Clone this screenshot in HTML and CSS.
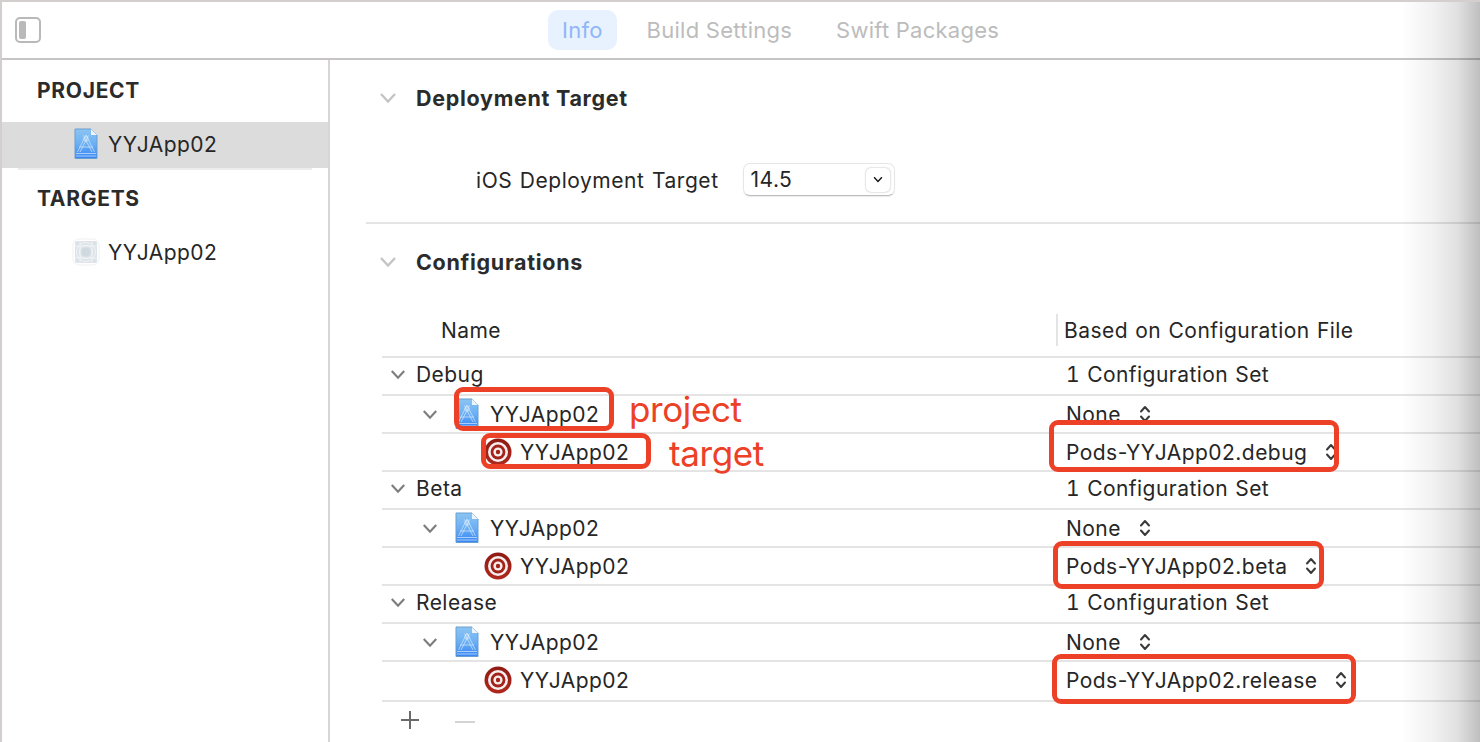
FILE: index.html
```html
<!DOCTYPE html>
<html lang="en">
<head>
  <meta charset="UTF-8">
  <title>YYJApp02 - Info</title>
  <link rel="stylesheet" href="styles.css">
</head>
<body>

  <!-- shared icons -->
  <svg class="defs" width="0" height="0">
    <defs>
      <linearGradient id="docBlue" x1="0" y1="0" x2="0" y2="1">
        <stop offset="0" stop-color="#8cc4f2"/>
        <stop offset="0.5" stop-color="#6cb0f4"/>
        <stop offset="1" stop-color="#3584f5"/>
      </linearGradient>
      <linearGradient id="targetRed" x1="0" y1="0" x2="0" y2="1">
        <stop offset="0" stop-color="#8f1a14"/>
        <stop offset="1" stop-color="#b0281e"/>
      </linearGradient>
      <symbol id="chevron" viewBox="0 0 18 12">
        <path d="M2 2 L9 9.5 L16 2" fill="none" stroke="currentColor" stroke-width="2.4"/>
      </symbol>
      <symbol id="stepper" viewBox="0 0 12 20">
        <path d="M2 7.5 L6 3 L10 7.5 M2 12.5 L6 17 L10 12.5" fill="none" stroke="#3a3a3a" stroke-width="2" stroke-linecap="round" stroke-linejoin="round"/>
      </symbol>
      <symbol id="doc" viewBox="0 0 24 32">
        <path d="M1 1 H17 L23 7 V30.5 H1 Z" fill="url(#docBlue)" stroke="#6b9fd0" stroke-width="1"/>
        <path d="M17 1 V7 H23 Z" fill="#eef4fb"/>
        <path d="M12 7 L3.5 24 M12 7 L20.5 24 M9.5 7.5 L18 24 M14.5 7.5 L6 24 M5 19 H19 M2 25.5 H22 M2 28 H22" fill="none" stroke="#e4f0fc" stroke-opacity="0.7" stroke-width="0.9"/>
        <circle cx="12" cy="11" r="2.2" fill="none" stroke="#e4f0fc" stroke-opacity="0.7" stroke-width="0.9"/>
      </symbol>
      <symbol id="target" viewBox="0 0 28 28">
        <circle cx="14" cy="14" r="13.5" fill="url(#targetRed)"/>
        <circle cx="14" cy="14" r="10" fill="#f6efee"/>
        <circle cx="14" cy="14" r="7.4" fill="#a3231b"/>
        <circle cx="14" cy="14" r="4.6" fill="#f6efee"/>
        <circle cx="14" cy="14" r="2.2" fill="#a3231b"/>
      </symbol>
      <symbol id="appTarget" viewBox="0 0 28 28">
        <rect x="1" y="1" width="26" height="26" rx="6" fill="#fff" stroke="#f0f1f3"/>
        <rect x="3" y="3" width="22" height="22" rx="2" fill="#dbe3e8"/>
        <circle cx="14" cy="14" r="9.5" fill="none" stroke="#f2f5f6"/>
        <circle cx="14" cy="14" r="6.8" fill="none" stroke="#f2f5f6"/>
        <circle cx="14" cy="14" r="4.6" fill="#cfd9df"/>
        <path d="M3 8 H25 M3 20 H25 M8 3 V25 M20 3 V25" stroke="#f2f5f6" stroke-width="0.8"/>
      </symbol>
    </defs>
  </svg>

  <div class="window">
    <header class="toolbar">
      <span class="sidebar-toggle"><span class="sidebar-toggle-fill"></span></span>
      <nav class="tabs">
        <span class="tab tab-active">Info</span>
        <span class="tab">Build Settings</span>
        <span class="tab">Swift Packages</span>
      </nav>
    </header>

    <div class="content">
      <aside class="sidebar">
        <h3 class="sidebar-title">PROJECT</h3>
        <div class="sidebar-item sidebar-item-selected">
          <svg class="icon-doc-side"><use href="#doc"/></svg>
          <span>YYJApp02</span>
        </div>
        <div class="sidebar-rule"></div>
        <h3 class="sidebar-title sidebar-title-targets">TARGETS</h3>
        <div class="sidebar-item">
          <svg class="icon-app-target"><use href="#appTarget"/></svg>
          <span>YYJApp02</span>
        </div>
      </aside>

      <main class="main">
        <section class="section-deploy">
          <div class="section-head">
            <svg class="chevron-head"><use href="#chevron"/></svg>
            <h2>Deployment Target</h2>
          </div>
          <div class="form-row">
            <label>iOS Deployment Target</label>
            <div class="popup">
              <span>14.5</span>
              <span class="popup-btn"><svg class="popup-chevron"><use href="#chevron"/></svg></span>
            </div>
          </div>
        </section>

        <section class="section-config">
          <div class="section-head">
            <svg class="chevron-head"><use href="#chevron"/></svg>
            <h2>Configurations</h2>
          </div>

          <div class="table">
            <div class="table-head">
              <div class="col-name">Name</div>
              <div class="col-file">Based on Configuration File</div>
            </div>

            <div class="row row-group">
              <div class="cell-name lvl-0"><svg class="chevron-row"><use href="#chevron"/></svg>Debug</div>
              <div class="cell-file config-set">1 Configuration Set</div>
            </div>
            <div class="row">
              <div class="cell-name lvl-1"><svg class="chevron-row"><use href="#chevron"/></svg><svg class="icon-doc"><use href="#doc"/></svg>YYJApp02</div>
              <div class="cell-file">None<svg class="stepper"><use href="#stepper"/></svg></div>
            </div>
            <div class="row">
              <div class="cell-name lvl-2"><svg class="icon-target"><use href="#target"/></svg>YYJApp02</div>
              <div class="cell-file">Pods-YYJApp02.debug<svg class="stepper"><use href="#stepper"/></svg></div>
            </div>

            <div class="row row-group">
              <div class="cell-name lvl-0"><svg class="chevron-row"><use href="#chevron"/></svg>Beta</div>
              <div class="cell-file config-set">1 Configuration Set</div>
            </div>
            <div class="row">
              <div class="cell-name lvl-1"><svg class="chevron-row"><use href="#chevron"/></svg><svg class="icon-doc"><use href="#doc"/></svg>YYJApp02</div>
              <div class="cell-file">None<svg class="stepper"><use href="#stepper"/></svg></div>
            </div>
            <div class="row">
              <div class="cell-name lvl-2"><svg class="icon-target"><use href="#target"/></svg>YYJApp02</div>
              <div class="cell-file">Pods-YYJApp02.beta<svg class="stepper"><use href="#stepper"/></svg></div>
            </div>

            <div class="row row-group">
              <div class="cell-name lvl-0"><svg class="chevron-row"><use href="#chevron"/></svg>Release</div>
              <div class="cell-file config-set">1 Configuration Set</div>
            </div>
            <div class="row">
              <div class="cell-name lvl-1"><svg class="chevron-row"><use href="#chevron"/></svg><svg class="icon-doc"><use href="#doc"/></svg>YYJApp02</div>
              <div class="cell-file">None<svg class="stepper"><use href="#stepper"/></svg></div>
            </div>
            <div class="row row-last">
              <div class="cell-name lvl-2"><svg class="icon-target"><use href="#target"/></svg>YYJApp02</div>
              <div class="cell-file">Pods-YYJApp02.release<svg class="stepper"><use href="#stepper"/></svg></div>
            </div>

            <div class="table-foot">
              <span class="foot-plus"></span>
              <span class="foot-minus"></span>
            </div>
          </div>
        </section>
      </main>
    </div>

    <!-- red markup drawn over the screenshot -->
    <div class="mark mark-project"></div>
    <div class="mark mark-target"></div>
    <div class="mark mark-debug"></div>
    <div class="mark mark-beta"></div>
    <div class="mark mark-release"></div>
    <span class="mark-label label-project">project</span>
    <span class="mark-label label-target">target</span>

    <div class="edge-shadow"></div>
  </div>

</body>
</html>
```

FILE: styles.css
```css
html, body {
  margin: 0;
  padding: 0;
}

body {
  font-family: Inter, "Liberation Sans", sans-serif;
  font-size: 21px;
  letter-spacing: 0.45px;
  word-spacing: 1px;
  color: #262626;
  background: #fff;
  overflow: hidden;
}

.defs {
  position: absolute;
}

.window {
  position: relative;
  width: 1480px;
  height: 742px;
  box-sizing: border-box;
  border-top: 2px solid #d3cfcf;
  border-left: 2px solid #d3cfcf;
  overflow: hidden;
}

/* toolbar */
.toolbar {
  display: flex;
  align-items: center;
  height: 56px;
  box-sizing: content-box;
  border-bottom: 2px solid #c6c4c4;
}

.sidebar-toggle {
  display: flex;
  width: 26px;
  height: 26px;
  box-sizing: border-box;
  margin-left: 13px;
  padding: 2px;
  border: 2px solid #b9b9b9;
  border-radius: 5px;
}

.sidebar-toggle-fill {
  width: 7px;
  background: #b9b9b9;
  border-radius: 2px;
}

.tabs {
  display: flex;
  gap: 16px;
  margin-left: 507px;
}

.tab {
  padding: 0 14px;
  height: 40px;
  line-height: 40px;
  font-size: 22px;
  letter-spacing: 0.25px;
  word-spacing: 0;
  color: #bcbcbc;
  border-radius: 10px;
}

.tab-active {
  background: #e8f1fe;
  color: #8fb6f9;
}

/* sidebar */
.content {
  display: flex;
  height: 682px;
}

.sidebar {
  width: 326px;
  flex: none;
  border-right: 2px solid #d8d5d5;
}

.sidebar-title {
  margin: 0;
  padding: 17px 0 0 35px;
  height: 62px;
  box-sizing: border-box;
  line-height: 28px;
  font-size: 21px;
  font-weight: 700;
  letter-spacing: 0.7px;
  color: #2b2b2b;
}

.sidebar-title-targets {
  padding-top: 15px;
  height: 59px;
}

.sidebar-item {
  display: flex;
  align-items: center;
  height: 46px;
  box-sizing: border-box;
  padding-left: 106px;
}

.sidebar-item-selected {
  background: #dcdcdc;
  padding-bottom: 2px;
}

.sidebar-rule {
  height: 2px;
  margin: 0 16px;
  background: #ececec;
}

.icon-doc-side {
  width: 24px;
  height: 32px;
  margin-left: -34px;
  margin-right: 10px;
}

.icon-app-target {
  width: 28px;
  height: 28px;
  margin-left: -36px;
  margin-right: 8px;
}

/* main pane */
.main {
  flex: 1;
  min-width: 0;
}

.section-head {
  display: flex;
  align-items: center;
  height: 36px;
  padding-left: 49px;
}

.section-head h2 {
  margin: 0;
  font-size: 21.5px;
  font-weight: 700;
  letter-spacing: 0.7px;
  word-spacing: 0;
  color: #2b2b2b;
}

.chevron-head {
  width: 18px;
  height: 12px;
  margin-right: 19px;
  color: #c4c4c4;
}

.section-deploy {
  padding-top: 20px;
}

.form-row {
  display: flex;
  align-items: center;
  height: 33px;
  margin-top: 47px;
  padding-left: 146px;
}

.form-row label {
  margin-right: 24px;
  padding-top: 2px;
  letter-spacing: 0.55px;
}

.popup {
  display: flex;
  align-items: center;
  justify-content: space-between;
  width: 152px;
  height: 33px;
  box-sizing: border-box;
  padding: 0 4px 0 7px;
  border: 1px solid #e6e6e6;
  border-bottom-color: #bdbdbd;
  border-radius: 7px;
  box-shadow: 0 1px 1px rgba(0, 0, 0, 0.08);
}

.popup-btn {
  display: flex;
  align-items: center;
  justify-content: center;
  width: 24px;
  height: 24px;
  border-radius: 5px;
  box-shadow: 0 0 2px rgba(0, 0, 0, 0.35);
}

.popup-chevron {
  width: 10px;
  height: 7px;
  color: #111;
}

.section-config {
  margin: 26px 0 0 36px;
  padding-top: 20px;
  border-top: 2px solid #e4e4e4;
}

.section-config .section-head {
  padding-left: 13px;
}

/* configurations table */
.table {
  margin: 34px 0 0 16px;
}

.table-head,
.row {
  display: flex;
  align-items: center;
  border-bottom: 2px solid #e4e4e4;
}

.table-head {
  height: 42px;
  align-items: flex-start;
}

.row {
  height: 36px;
  white-space: nowrap;
}

.row-group {
  height: 32px;
  padding-bottom: 4px;
}

.row-last {
  height: 36px;
  padding-bottom: 2px;
}

.col-name {
  width: 674px;
  height: 32px;
  line-height: 34px;
  padding-left: 59px;
  box-sizing: border-box;
  flex: none;
}

.col-file {
  height: 32px;
  line-height: 34px;
  padding-left: 6px;
  border-left: 2px solid #e4e4e4;
}

.cell-name {
  display: flex;
  align-items: center;
  width: 675px;
  flex: none;
  box-sizing: border-box;
}

.cell-file {
  display: flex;
  align-items: center;
  padding-left: 9px;
}

.config-set {
  font-feature-settings: "tnum";
}

.lvl-0 {
  padding-left: 8px;
}

.lvl-1 {
  padding-left: 40px;
}

.lvl-2 {
  padding-left: 102px;
}

.chevron-row {
  width: 16px;
  height: 11px;
  margin-right: 10px;
  color: #7d7d7d;
}

.lvl-1 .chevron-row {
  margin-right: 17px;
}

.icon-doc {
  width: 24px;
  height: 32px;
  margin-right: 11px;
}

.icon-target {
  width: 28px;
  height: 28px;
  margin-right: 8px;
}

.stepper {
  width: 12px;
  height: 20px;
  margin-left: 18px;
}

.table-foot {
  position: relative;
  height: 40px;
}

.foot-plus {
  position: absolute;
  left: 19px;
  top: 9px;
  width: 18px;
  height: 18px;
  background:
    linear-gradient(#6a6a6a, #6a6a6a) center / 18px 2px no-repeat,
    linear-gradient(#6a6a6a, #6a6a6a) center / 2px 18px no-repeat;
}

.foot-minus {
  position: absolute;
  left: 73px;
  top: 19px;
  width: 20px;
  height: 2px;
  background: #d4d4d4;
}

/* annotations */
.mark {
  position: absolute;
  box-sizing: border-box;
  border: 5px solid #ec4027;
  border-radius: 9px;
}

.mark-project {
  left: 452px;
  top: 385px;
  width: 160px;
  height: 44px;
}

.mark-target {
  left: 479px;
  top: 431px;
  width: 170px;
  height: 36px;
}

.mark-debug {
  left: 1047px;
  top: 418px;
  width: 290px;
  height: 52px;
}

.mark-beta {
  left: 1051px;
  top: 539px;
  width: 271px;
  height: 48px;
}

.mark-release {
  left: 1050px;
  top: 652px;
  width: 304px;
  height: 50px;
}

.mark-label {
  position: absolute;
  font-size: 35px;
  letter-spacing: -0.4px;
  line-height: 44px;
  color: #ec4027;
  white-space: nowrap;
}

.label-project {
  left: 627px;
  top: 385px;
}

.label-target {
  left: 667px;
  top: 429px;
}

.edge-shadow {
  position: absolute;
  top: -2px;
  right: 0;
  bottom: 0;
  width: 80px;
  background: linear-gradient(to right, rgba(0, 0, 0, 0), rgba(0, 0, 0, 0.05) 40%, rgba(0, 0, 0, 0.12) 72%, rgba(0, 0, 0, 0.25));
  pointer-events: none;
}
```
